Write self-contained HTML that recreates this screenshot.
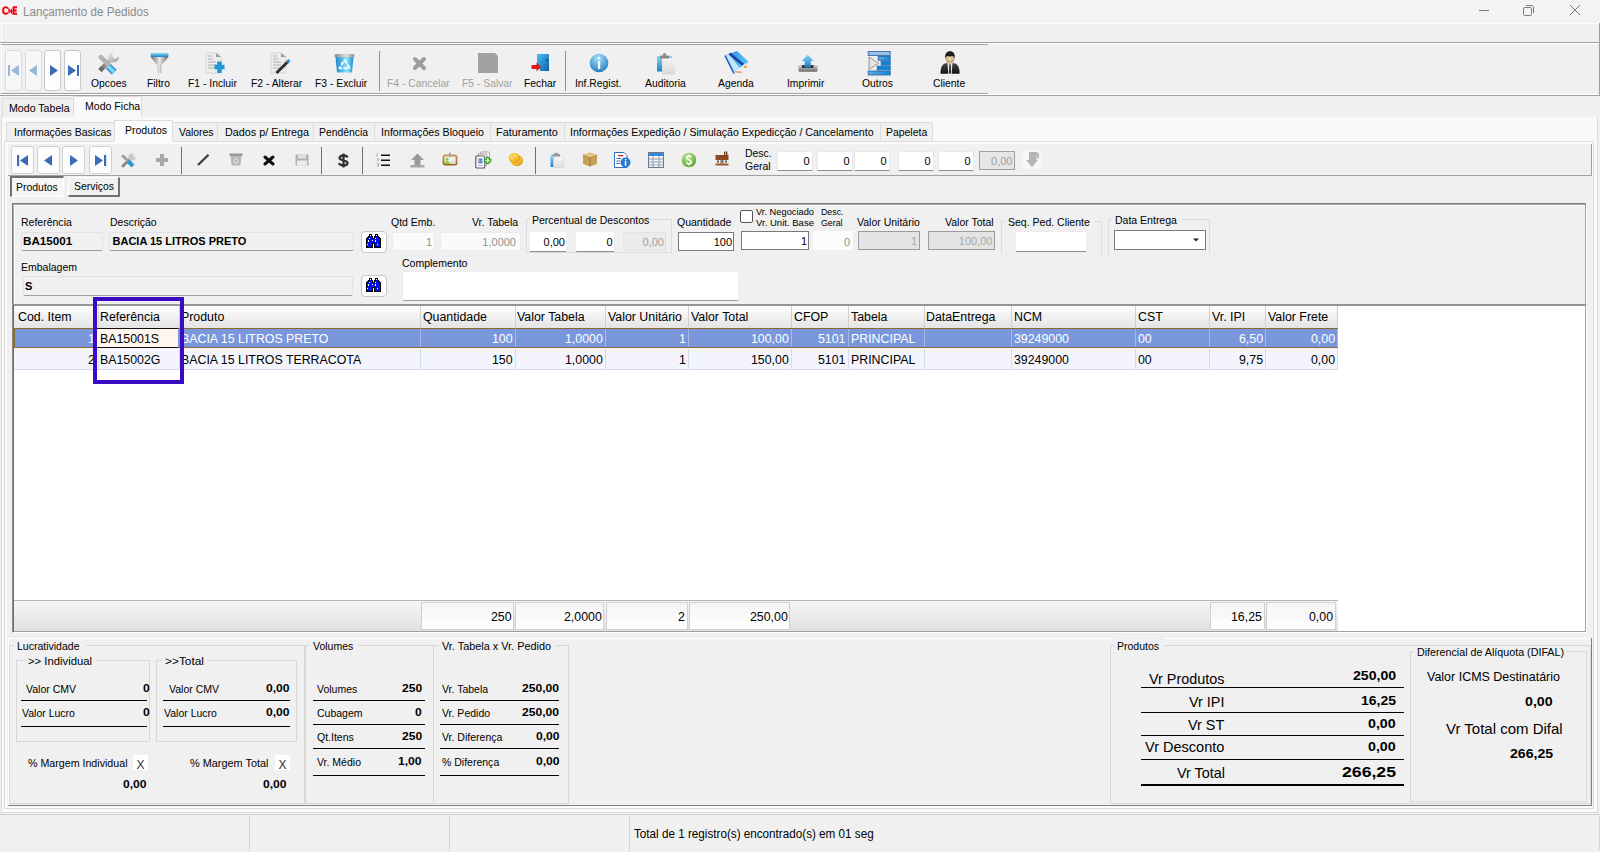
<!DOCTYPE html>
<html><head><meta charset="utf-8"><title>Lançamento de Pedidos</title>
<style>
html,body{margin:0;padding:0;}
body{width:1600px;height:852px;overflow:hidden;position:relative;background:#f0f0f0;font-family:"Liberation Sans",sans-serif;}
body>div,body>span,body>svg{position:absolute;box-sizing:border-box;}
.t{line-height:1;white-space:pre;}
</style></head><body>
<div style="left:0px;top:0px;width:1600px;height:23px;background:#f3f3f3"></div>
<div style="left:0px;top:23px;width:1599px;height:1px;background:#fbfbfb"></div>
<span class="t" style="left:23.40px;top:5.62px;font-size:12.5px;color:#8a8a8a;transform:scaleX(0.9331);transform-origin:0 0;">Lançamento de Pedidos</span>
<div style="left:1479px;top:10px;width:10px;height:1px;background:#7a7a7a"></div>
<svg style="left:1522px;top:4px;" width="14" height="13" viewBox="0 0 14 13"><rect x="1.5" y="3.5" width="8" height="8" rx="1.2" fill="none" stroke="#7a7a7a"/><path d="M4 1.5h5.5a2 2 0 0 1 2 2V9" fill="none" stroke="#7a7a7a"/></svg>
<svg style="left:1569px;top:4px;" width="13" height="13" viewBox="0 0 13 13"><path d="M1 1L11 11M11 1L1 11" stroke="#7a7a7a" stroke-width="1"/></svg>
<div style="left:0px;top:24px;width:1599px;height:18px;background:#f0f0f0"></div>
<div style="left:1px;top:24px;width:1px;height:18px;background:#fff"></div>
<div style="left:0px;top:42px;width:1599px;height:1px;background:#a0a0a0"></div>
<div style="left:0px;top:43px;width:1599px;height:1px;background:#ffffff"></div>
<div style="left:1599px;top:23px;width:1px;height:73px;background:#a0a0a0"></div>
<div style="left:1px;top:44px;width:987px;height:1px;background:#a0a0a0"></div>
<div style="left:1px;top:45px;width:1px;height:48px;background:#ffffff"></div>
<div style="left:1px;top:93px;width:987px;height:1px;background:#a0a0a0"></div>
<div style="left:0px;top:94px;width:1599px;height:1px;background:#ffffff"></div>
<div style="left:0px;top:95px;width:1599px;height:1px;background:#a0a0a0"></div>
<div style="left:5px;top:50px;width:17px;height:41px;background:#f7f7f7;border:1px solid #dcdcdc;border-radius:3px"></div>
<div style="left:25px;top:50px;width:17px;height:41px;background:#f7f7f7;border:1px solid #dcdcdc;border-radius:3px"></div>
<div style="left:44px;top:50px;width:17px;height:41px;background:#fdfdfd;border:1px solid #c8c8c8;border-radius:3px"></div>
<div style="left:64px;top:50px;width:17px;height:41px;background:#fdfdfd;border:1px solid #c8c8c8;border-radius:3px"></div>
<svg style="left:5px;top:63px;" width="17" height="14" viewBox="0 0 17 14"><rect x="3" y="2" width="2" height="11" fill="#9ab7d9"/><path d="M14 2L6 7.5L14 13Z" fill="#9ab7d9"/></svg>
<svg style="left:25px;top:63px;" width="17" height="14" viewBox="0 0 17 14"><path d="M12 2L4 7.5L12 13Z" fill="#9ab7d9"/></svg>
<svg style="left:45px;top:63px;" width="17" height="14" viewBox="0 0 17 14"><path d="M5 2L13 7.5L5 13Z" fill="#3a6db5"/></svg>
<svg style="left:65px;top:63px;" width="17" height="14" viewBox="0 0 17 14"><path d="M3 2L11 7.5L3 13Z" fill="#3a6db5"/><rect x="12" y="2" width="2" height="11" fill="#3a6db5"/></svg>
<span class="t" style="left:90.58px;top:77.59px;font-size:11px;color:#000;transform:scaleX(0.9400);transform-origin:0 0;">Opcoes</span>
<span class="t" style="left:146.51px;top:77.59px;font-size:11px;color:#000;transform:scaleX(0.9400);transform-origin:0 0;">Filtro</span>
<span class="t" style="left:188.08px;top:77.59px;font-size:11px;color:#000;transform:scaleX(0.9400);transform-origin:0 0;">F1 - Incluir</span>
<span class="t" style="left:250.93px;top:77.59px;font-size:11px;color:#000;transform:scaleX(0.9400);transform-origin:0 0;">F2 - Alterar</span>
<span class="t" style="left:315.36px;top:77.59px;font-size:11px;color:#000;transform:scaleX(0.9400);transform-origin:0 0;">F3 - Excluir</span>
<span class="t" style="left:386.68px;top:77.59px;font-size:11px;color:#a0a0a0;transform:scaleX(0.9400);transform-origin:0 0;">F4 - Cancelar</span>
<span class="t" style="left:461.72px;top:77.59px;font-size:11px;color:#a0a0a0;transform:scaleX(0.9400);transform-origin:0 0;">F5 - Salvar</span>
<span class="t" style="left:523.91px;top:77.59px;font-size:11px;color:#000;transform:scaleX(0.9400);transform-origin:0 0;">Fechar</span>
<span class="t" style="left:574.72px;top:77.59px;font-size:11px;color:#000;transform:scaleX(0.9400);transform-origin:0 0;">Inf.Regist.</span>
<span class="t" style="left:644.59px;top:77.59px;font-size:11px;color:#000;transform:scaleX(0.9400);transform-origin:0 0;">Auditoria</span>
<span class="t" style="left:718.17px;top:77.59px;font-size:11px;color:#000;transform:scaleX(0.9400);transform-origin:0 0;">Agenda</span>
<span class="t" style="left:787.33px;top:77.59px;font-size:11px;color:#000;transform:scaleX(0.9400);transform-origin:0 0;">Imprimir</span>
<span class="t" style="left:862.18px;top:77.59px;font-size:11px;color:#000;transform:scaleX(0.9400);transform-origin:0 0;">Outros</span>
<span class="t" style="left:932.51px;top:77.59px;font-size:11px;color:#000;transform:scaleX(0.9400);transform-origin:0 0;">Cliente</span>
<div style="left:379px;top:51px;width:1px;height:40px;background:#909090"></div>
<div style="left:565px;top:51px;width:1px;height:40px;background:#909090"></div>
<div style="left:0px;top:96px;width:1599px;height:21px;background:#f0f0f0"></div>
<div style="left:2px;top:98px;width:72px;height:19px;background:#f0f0f0;border:1px solid #dcdcdc;border-bottom:none"></div>
<span class="t" style="left:9.40px;top:102.89px;font-size:11px;color:#000;transform:scaleX(0.9651);transform-origin:0 0;">Modo Tabela</span>
<div style="left:73px;top:96px;width:69px;height:22px;background:#f9f9f9;border:1px solid #dcdcdc;border-bottom:none"></div>
<span class="t" style="left:84.50px;top:101.19px;font-size:11px;color:#000;transform:scaleX(0.9600);transform-origin:0 0;">Modo Ficha</span>
<div style="left:1px;top:117px;width:1597px;height:696px;background:#f9f9f9;border:1px solid #dcdcdc;border-top:none"></div>
<div style="left:6px;top:122px;width:109px;height:19px;background:#f0f0f0;border:1px solid #dcdcdc;border-bottom:none"></div>
<span class="t" style="left:13.50px;top:126.69px;font-size:11px;color:#000;transform:scaleX(0.9549);transform-origin:0 0;">Informações Basicas</span>
<div style="left:172px;top:122px;width:46px;height:19px;background:#f0f0f0;border:1px solid #dcdcdc;border-bottom:none"></div>
<span class="t" style="left:178.70px;top:126.69px;font-size:11px;color:#000;transform:scaleX(0.9457);transform-origin:0 0;">Valores</span>
<div style="left:217px;top:122px;width:97px;height:19px;background:#f0f0f0;border:1px solid #dcdcdc;border-bottom:none"></div>
<span class="t" style="left:225.20px;top:126.69px;font-size:11px;color:#000;transform:scaleX(0.9812);transform-origin:0 0;">Dados p/ Entrega</span>
<div style="left:313px;top:122px;width:62px;height:19px;background:#f0f0f0;border:1px solid #dcdcdc;border-bottom:none"></div>
<span class="t" style="left:319.20px;top:126.69px;font-size:11px;color:#000;transform:scaleX(0.9425);transform-origin:0 0;">Pendência</span>
<div style="left:374px;top:122px;width:117px;height:19px;background:#f0f0f0;border:1px solid #dcdcdc;border-bottom:none"></div>
<span class="t" style="left:380.50px;top:126.69px;font-size:11px;color:#000;transform:scaleX(0.9681);transform-origin:0 0;">Informações Bloqueio</span>
<div style="left:490px;top:122px;width:75px;height:19px;background:#f0f0f0;border:1px solid #dcdcdc;border-bottom:none"></div>
<span class="t" style="left:495.60px;top:126.69px;font-size:11px;color:#000;transform:scaleX(0.9909);transform-origin:0 0;">Faturamento</span>
<div style="left:564px;top:122px;width:317px;height:19px;background:#f0f0f0;border:1px solid #dcdcdc;border-bottom:none"></div>
<span class="t" style="left:569.60px;top:126.69px;font-size:11px;color:#000;transform:scaleX(0.9622);transform-origin:0 0;">Informações Expedição / Simulação Expedicção / Cancelamento</span>
<div style="left:880px;top:122px;width:53px;height:19px;background:#f0f0f0;border:1px solid #dcdcdc;border-bottom:none"></div>
<span class="t" style="left:885.80px;top:126.69px;font-size:11px;color:#000;transform:scaleX(0.9487);transform-origin:0 0;">Papeleta</span>
<div style="left:114px;top:120px;width:59px;height:22px;background:#fbfbfb;border:1px solid #dcdcdc;border-bottom:none"></div>
<span class="t" style="left:125.40px;top:124.89px;font-size:11px;color:#000;transform:scaleX(0.9550);transform-origin:0 0;">Produtos</span>
<div style="left:4px;top:141px;width:1590px;height:668px;background:#fbfbfb;border:1px solid #dcdcdc;border-top:none"></div>
<div style="left:172px;top:141px;width:1422px;height:1px;background:#dcdcdc"></div>
<div style="left:4px;top:141px;width:110px;height:1px;background:#dcdcdc"></div>
<div style="left:8px;top:144px;width:1584px;height:31px;background:#f0f0f0"></div>
<div style="left:8px;top:175px;width:1584px;height:1px;background:#a0a0a0"></div>
<div style="left:1591px;top:144px;width:1px;height:31px;background:#a0a0a0"></div>
<div style="left:7px;top:176px;width:1586px;height:630px;background:#f0f0f0"></div>
<div style="left:11px;top:146px;width:23px;height:28px;background:#fdfdfd;border:1px solid #d0d0d0;border-radius:3px"></div>
<div style="left:37px;top:146px;width:23px;height:28px;background:#fdfdfd;border:1px solid #d0d0d0;border-radius:3px"></div>
<div style="left:62px;top:146px;width:23px;height:28px;background:#fdfdfd;border:1px solid #d0d0d0;border-radius:3px"></div>
<div style="left:89px;top:146px;width:23px;height:28px;background:#fdfdfd;border:1px solid #d0d0d0;border-radius:3px"></div>
<svg style="left:11px;top:153px;" width="23" height="14" viewBox="0 0 23 14"><rect x="6" y="2" width="2.2" height="11" fill="#3a6db5"/><path d="M17 2L9 7.5L17 13Z" fill="#3a6db5"/></svg>
<svg style="left:37px;top:153px;" width="23" height="14" viewBox="0 0 23 14"><path d="M15 2L7 7.5L15 13Z" fill="#3a6db5"/></svg>
<svg style="left:62px;top:153px;" width="23" height="14" viewBox="0 0 23 14"><path d="M8 2L16 7.5L8 13Z" fill="#3a6db5"/></svg>
<svg style="left:89px;top:153px;" width="23" height="14" viewBox="0 0 23 14"><path d="M6 2L14 7.5L6 13Z" fill="#3a6db5"/><rect x="15" y="2" width="2.2" height="11" fill="#3a6db5"/></svg>
<div style="left:181px;top:147px;width:1px;height:27px;background:#707070"></div>
<div style="left:321px;top:147px;width:1px;height:27px;background:#707070"></div>
<div style="left:362px;top:147px;width:1px;height:27px;background:#707070"></div>
<div style="left:535px;top:147px;width:1px;height:27px;background:#707070"></div>
<span class="t" style="left:745.40px;top:148.29px;font-size:11px;color:#000;transform:scaleX(0.9500);transform-origin:0 0;">Desc.</span>
<span class="t" style="left:745.40px;top:161.29px;font-size:11px;color:#000;transform:scaleX(0.9500);transform-origin:0 0;">Geral</span>
<div style="left:777px;top:151px;width:36px;height:20px;background:#fff;border:1px solid #e8e8e8;border-bottom:1px solid #8e8e8e;border-radius:2px 2px 0 0"></div>
<span class="t" style="left:803.38px;top:156.09px;font-size:11px;color:#000;">0</span>
<div style="left:817px;top:151px;width:36px;height:20px;background:#fff;border:1px solid #e8e8e8;border-bottom:1px solid #8e8e8e;border-radius:2px 2px 0 0"></div>
<span class="t" style="left:843.38px;top:156.09px;font-size:11px;color:#000;">0</span>
<div style="left:854px;top:151px;width:36px;height:20px;background:#fff;border:1px solid #e8e8e8;border-bottom:1px solid #8e8e8e;border-radius:2px 2px 0 0"></div>
<span class="t" style="left:880.38px;top:156.09px;font-size:11px;color:#000;">0</span>
<div style="left:898px;top:151px;width:36px;height:20px;background:#fff;border:1px solid #e8e8e8;border-bottom:1px solid #8e8e8e;border-radius:2px 2px 0 0"></div>
<span class="t" style="left:924.38px;top:156.09px;font-size:11px;color:#000;">0</span>
<div style="left:938px;top:151px;width:36px;height:20px;background:#fff;border:1px solid #e8e8e8;border-bottom:1px solid #8e8e8e;border-radius:2px 2px 0 0"></div>
<span class="t" style="left:964.38px;top:156.09px;font-size:11px;color:#000;">0</span>
<div style="left:979px;top:151px;width:36px;height:19px;background:#e6e6e6;border:1px solid #a0a0a0"></div>
<span class="t" style="left:991.09px;top:155.69px;font-size:11px;color:#a0a0a0;">0,00</span>
<div style="left:1022px;top:150px;width:19px;height:19px;background:#f7f7f7;border-radius:3px"></div>
<div style="left:10px;top:176px;width:54px;height:21px;background:#f6f6f6;border-left:2px solid #707070;border-top:2px solid #707070;border-right:1px solid #fff;border-bottom:1px solid #fff"></div>
<span class="t" style="left:16.00px;top:182.29px;font-size:11px;color:#000;transform:scaleX(0.9500);transform-origin:0 0;">Produtos</span>
<div style="left:68px;top:177px;width:52px;height:20px;background:#f0f0f0;border-left:1px solid #fff;border-top:1px solid #fff;border-right:2px solid #707070;border-bottom:2px solid #707070"></div>
<span class="t" style="left:73.50px;top:181.29px;font-size:11px;color:#000;transform:scaleX(0.9500);transform-origin:0 0;">Serviços</span>
<div style="left:12px;top:203px;width:1575px;height:102px;background:#f0f0f0;border-left:1px solid #808080;border-top:1px solid #808080"></div>
<div style="left:13px;top:204px;width:1573px;height:1px;background:#a8a8a8"></div>
<div style="left:13px;top:204px;width:1px;height:101px;background:#a8a8a8"></div>
<div style="left:14px;top:205px;width:1572px;height:1px;background:#fff"></div>
<div style="left:14px;top:205px;width:1px;height:100px;background:#fff"></div>
<div style="left:1585px;top:204px;width:1px;height:101px;background:#a0a0a0"></div>
<div style="left:1586px;top:203px;width:1px;height:102px;background:#fff"></div>
<span class="t" style="left:21.40px;top:217.09px;font-size:11px;color:#000;transform:scaleX(0.9550);transform-origin:0 0;">Referência</span>
<span class="t" style="left:110.00px;top:217.09px;font-size:11px;color:#000;transform:scaleX(0.9550);transform-origin:0 0;">Descrição</span>
<div style="left:21px;top:232px;width:82px;height:19px;background:#f0f0f0;border:1px solid #e2e2e2;border-bottom:1px solid #a0a0a0;border-radius:2px"></div>
<span class="t" style="left:23.20px;top:236.29px;font-size:11px;color:#000;font-weight:bold;transform:scaleX(1.0607);transform-origin:0 0;">BA15001</span>
<div style="left:109px;top:232px;width:245px;height:19px;background:#f0f0f0;border:1px solid #e2e2e2;border-bottom:1px solid #a0a0a0;border-radius:2px"></div>
<span class="t" style="left:112.50px;top:236.29px;font-size:11px;color:#000;font-weight:bold;">BACIA 15 LITROS PRETO</span>
<span class="t" style="left:21.40px;top:262.29px;font-size:11px;color:#000;transform:scaleX(0.9550);transform-origin:0 0;">Embalagem</span>
<div style="left:23px;top:276px;width:330px;height:20px;background:#f0f0f0;border:1px solid #e2e2e2;border-bottom:1px solid #a0a0a0;border-radius:2px"></div>
<span class="t" style="left:25.00px;top:280.59px;font-size:11px;color:#000;font-weight:bold;">S</span>
<div style="left:361px;top:231px;width:26px;height:22px;background:#fdfdfd;border:1px solid #c8c8c8;border-radius:4px"></div>
<div style="left:361px;top:275px;width:26px;height:22px;background:#fdfdfd;border:1px solid #c8c8c8;border-radius:4px"></div>
<span class="t" style="left:390.50px;top:217.49px;font-size:11px;color:#000;transform:scaleX(0.9550);transform-origin:0 0;">Qtd Emb.</span>
<div style="left:392px;top:232px;width:43px;height:19px;background:#fafafa;border:1px solid #ececec"></div>
<span class="t" style="left:425.88px;top:237.09px;font-size:11px;color:#909090;">1</span>
<span class="t" style="left:471.86px;top:217.49px;font-size:11px;color:#000;transform:scaleX(0.9550);transform-origin:0 0;">Vr. Tabela</span>
<div style="left:440px;top:232px;width:81px;height:19px;background:#fafafa;border:1px solid #ececec"></div>
<span class="t" style="left:482.35px;top:237.09px;font-size:11px;color:#909090;">1,0000</span>
<div style="left:526px;top:219px;width:146px;height:34px;border:1px solid #dcdcdc"></div>
<div style="left:530px;top:215px;width:112px;height:10px;background:#f0f0f0"></div>
<span class="t" style="left:532.00px;top:215.49px;font-size:11px;color:#000;transform:scaleX(0.9550);transform-origin:0 0;">Percentual de Descontos</span>
<div style="left:529px;top:231px;width:38px;height:21px;background:#fff;border:1px solid #ececec;border-bottom:1px solid #8a8a8a;border-radius:2px"></div>
<span class="t" style="left:543.59px;top:237.09px;font-size:11px;color:#000;">0,00</span>
<div style="left:575px;top:231px;width:40px;height:21px;background:#fff;border:1px solid #ececec;border-bottom:1px solid #8a8a8a;border-radius:2px"></div>
<span class="t" style="left:606.38px;top:237.09px;font-size:11px;color:#000;">0</span>
<div style="left:623px;top:232px;width:43px;height:19px;background:#ebebeb;border:1px solid #e4e4e4"></div>
<span class="t" style="left:642.59px;top:237.09px;font-size:11px;color:#a0a0a0;">0,00</span>
<span class="t" style="left:677.40px;top:217.49px;font-size:11px;color:#000;transform:scaleX(0.9550);transform-origin:0 0;">Quantidade</span>
<div style="left:678px;top:232px;width:56px;height:19px;background:#fff;border:1px solid #7a7a7a"></div>
<span class="t" style="left:713.65px;top:237.09px;font-size:11px;color:#000;">100</span>
<div style="left:740px;top:210px;width:13px;height:13px;background:#fff;border:1px solid #555;border-radius:2px"></div>
<span class="t" style="left:755.70px;top:207.88px;font-size:9px;color:#000;transform:scaleX(1.0320);transform-origin:0 0;">Vr. Negociado</span>
<span class="t" style="left:755.70px;top:218.58px;font-size:9px;color:#000;transform:scaleX(1.0605);transform-origin:0 0;">Vr. Unit. Base</span>
<span class="t" style="left:821.30px;top:207.88px;font-size:9px;color:#000;transform:scaleX(0.9800);transform-origin:0 0;">Desc.</span>
<span class="t" style="left:821.30px;top:218.58px;font-size:9px;color:#000;transform:scaleX(0.9800);transform-origin:0 0;">Geral</span>
<div style="left:741px;top:231px;width:68px;height:19px;background:#fff;border:1px solid #7a7a7a"></div>
<span class="t" style="left:800.88px;top:236.29px;font-size:11px;color:#000;">1</span>
<div style="left:813px;top:231px;width:40px;height:19px;background:#fcfcfc"></div>
<span class="t" style="left:843.88px;top:236.79px;font-size:11px;color:#909090;">0</span>
<span class="t" style="left:856.50px;top:216.89px;font-size:11px;color:#000;transform:scaleX(0.9550);transform-origin:0 0;">Valor Unitário</span>
<div style="left:858px;top:231px;width:62px;height:19px;background:#e4e4e4;border:1px solid #9c9c9c"></div>
<span class="t" style="left:910.88px;top:236.49px;font-size:11px;color:#a8a8a8;">1</span>
<span class="t" style="left:944.74px;top:216.89px;font-size:11px;color:#000;transform:scaleX(0.9550);transform-origin:0 0;">Valor Total</span>
<div style="left:928px;top:231px;width:67px;height:19px;background:#e4e4e4;border:1px solid #9c9c9c"></div>
<span class="t" style="left:958.85px;top:236.49px;font-size:11px;color:#a8a8a8;">100,00</span>
<div style="left:1001px;top:221px;width:101px;height:33px;border:1px solid #dcdcdc;border-bottom:none"></div>
<div style="left:1005px;top:216px;width:90px;height:10px;background:#f0f0f0"></div>
<span class="t" style="left:1008.00px;top:216.89px;font-size:11px;color:#000;transform:scaleX(0.9550);transform-origin:0 0;">Seq. Ped. Cliente</span>
<div style="left:1015px;top:231px;width:72px;height:21px;background:#fff;border:1px solid #ececec;border-bottom:1px solid #8a8a8a;border-radius:2px"></div>
<div style="left:1108px;top:219px;width:102px;height:35px;border:1px solid #dcdcdc;border-bottom:none"></div>
<div style="left:1112px;top:214px;width:70px;height:10px;background:#f0f0f0"></div>
<span class="t" style="left:1115.30px;top:215.39px;font-size:11px;color:#000;transform:scaleX(0.9550);transform-origin:0 0;">Data Entrega</span>
<div style="left:1114px;top:230px;width:92px;height:20px;background:#fff;border:1px solid #7a7a7a"></div>
<svg style="left:1192px;top:237px;" width="9" height="6" viewBox="0 0 9 6"><path d="M1 1.5h6L4 4.5Z" fill="#222"/></svg>
<span class="t" style="left:401.80px;top:258.49px;font-size:11px;color:#000;transform:scaleX(0.9550);transform-origin:0 0;">Complemento</span>
<div style="left:402px;top:271px;width:337px;height:30px;background:#fff;border:1px solid #ececec;border-bottom:1px solid #9a9a9a;border-radius:2px"></div>
<div style="left:12px;top:304px;width:1575px;height:329px;background:#fff;border-left:1px solid #8a8a8a;border-top:1px solid #959595;border-right:1px solid #fff;border-bottom:1px solid #fff"></div>
<div style="left:13px;top:305px;width:1573px;height:1px;background:#959595"></div>
<div style="left:13px;top:305px;width:1px;height:327px;background:#6e6e6e"></div>
<div style="left:1585px;top:305px;width:1px;height:327px;background:#a0a0a0"></div>
<div style="left:14px;top:631px;width:1572px;height:1px;background:#a0a0a0"></div>
<div style="left:14px;top:306px;width:1324px;height:22px;background:linear-gradient(#fdfdfd,#e4e4e4)"></div>
<div style="left:98px;top:306px;width:1px;height:22px;background:#d0d0d0"></div>
<div style="left:179px;top:306px;width:1px;height:22px;background:#d0d0d0"></div>
<div style="left:420px;top:306px;width:1px;height:22px;background:#d0d0d0"></div>
<div style="left:515px;top:306px;width:1px;height:22px;background:#d0d0d0"></div>
<div style="left:605px;top:306px;width:1px;height:22px;background:#d0d0d0"></div>
<div style="left:688px;top:306px;width:1px;height:22px;background:#d0d0d0"></div>
<div style="left:791px;top:306px;width:1px;height:22px;background:#d0d0d0"></div>
<div style="left:848px;top:306px;width:1px;height:22px;background:#d0d0d0"></div>
<div style="left:924px;top:306px;width:1px;height:22px;background:#d0d0d0"></div>
<div style="left:1011px;top:306px;width:1px;height:22px;background:#d0d0d0"></div>
<div style="left:1135px;top:306px;width:1px;height:22px;background:#d0d0d0"></div>
<div style="left:1209px;top:306px;width:1px;height:22px;background:#d0d0d0"></div>
<div style="left:1265px;top:306px;width:1px;height:22px;background:#d0d0d0"></div>
<div style="left:1337px;top:306px;width:1px;height:22px;background:#d0d0d0"></div>
<span class="t" style="left:17.50px;top:311.24px;font-size:12px;color:#000;transform:scaleX(1.0300);transform-origin:0 0;">Cod. Item</span>
<span class="t" style="left:100.25px;top:311.24px;font-size:12px;color:#000;transform:scaleX(1.0300);transform-origin:0 0;">Referência</span>
<span class="t" style="left:181.25px;top:311.24px;font-size:12px;color:#000;transform:scaleX(1.0300);transform-origin:0 0;">Produto</span>
<span class="t" style="left:422.80px;top:311.24px;font-size:12px;color:#000;transform:scaleX(1.0300);transform-origin:0 0;">Quantidade</span>
<span class="t" style="left:517.20px;top:311.24px;font-size:12px;color:#000;transform:scaleX(1.0300);transform-origin:0 0;">Valor Tabela</span>
<span class="t" style="left:607.80px;top:311.24px;font-size:12px;color:#000;transform:scaleX(1.0300);transform-origin:0 0;">Valor Unitário</span>
<span class="t" style="left:690.50px;top:311.24px;font-size:12px;color:#000;transform:scaleX(1.0300);transform-origin:0 0;">Valor Total</span>
<span class="t" style="left:793.75px;top:311.24px;font-size:12px;color:#000;transform:scaleX(1.0300);transform-origin:0 0;">CFOP</span>
<span class="t" style="left:850.90px;top:311.24px;font-size:12px;color:#000;transform:scaleX(1.0300);transform-origin:0 0;">Tabela</span>
<span class="t" style="left:926.25px;top:311.24px;font-size:12px;color:#000;transform:scaleX(1.0300);transform-origin:0 0;">DataEntrega</span>
<span class="t" style="left:1013.75px;top:311.24px;font-size:12px;color:#000;transform:scaleX(1.0300);transform-origin:0 0;">NCM</span>
<span class="t" style="left:1137.80px;top:311.24px;font-size:12px;color:#000;transform:scaleX(1.0300);transform-origin:0 0;">CST</span>
<span class="t" style="left:1211.50px;top:311.24px;font-size:12px;color:#000;transform:scaleX(1.0300);transform-origin:0 0;">Vr. IPI</span>
<span class="t" style="left:1267.80px;top:311.24px;font-size:12px;color:#000;transform:scaleX(1.0300);transform-origin:0 0;">Valor Frete</span>
<div style="left:14px;top:328px;width:1324px;height:20px;background:#7b97dc;border:1px solid #8c6a2c"></div>
<div style="left:14px;top:348px;width:1324px;height:22px;background:#f4f5fc;border-bottom:1px solid #d4dbe8"></div>
<div style="left:98px;top:349px;width:1px;height:21px;background:#d6dcea"></div>
<div style="left:179px;top:349px;width:1px;height:21px;background:#d6dcea"></div>
<div style="left:420px;top:349px;width:1px;height:21px;background:#d6dcea"></div>
<div style="left:420px;top:329px;width:1px;height:18px;background:#a8b8e8"></div>
<div style="left:515px;top:349px;width:1px;height:21px;background:#d6dcea"></div>
<div style="left:515px;top:329px;width:1px;height:18px;background:#a8b8e8"></div>
<div style="left:605px;top:349px;width:1px;height:21px;background:#d6dcea"></div>
<div style="left:605px;top:329px;width:1px;height:18px;background:#a8b8e8"></div>
<div style="left:688px;top:349px;width:1px;height:21px;background:#d6dcea"></div>
<div style="left:688px;top:329px;width:1px;height:18px;background:#a8b8e8"></div>
<div style="left:791px;top:349px;width:1px;height:21px;background:#d6dcea"></div>
<div style="left:791px;top:329px;width:1px;height:18px;background:#a8b8e8"></div>
<div style="left:848px;top:349px;width:1px;height:21px;background:#d6dcea"></div>
<div style="left:848px;top:329px;width:1px;height:18px;background:#a8b8e8"></div>
<div style="left:924px;top:349px;width:1px;height:21px;background:#d6dcea"></div>
<div style="left:924px;top:329px;width:1px;height:18px;background:#a8b8e8"></div>
<div style="left:1011px;top:349px;width:1px;height:21px;background:#d6dcea"></div>
<div style="left:1011px;top:329px;width:1px;height:18px;background:#a8b8e8"></div>
<div style="left:1135px;top:349px;width:1px;height:21px;background:#d6dcea"></div>
<div style="left:1135px;top:329px;width:1px;height:18px;background:#a8b8e8"></div>
<div style="left:1209px;top:349px;width:1px;height:21px;background:#d6dcea"></div>
<div style="left:1209px;top:329px;width:1px;height:18px;background:#a8b8e8"></div>
<div style="left:1265px;top:349px;width:1px;height:21px;background:#d6dcea"></div>
<div style="left:1265px;top:329px;width:1px;height:18px;background:#a8b8e8"></div>
<div style="left:1337px;top:349px;width:1px;height:21px;background:#d6dcea"></div>
<div style="left:1337px;top:329px;width:1px;height:18px;background:#a8b8e8"></div>
<div style="left:97px;top:328px;width:81px;height:20px;background:#fff7ee;border-top:1px solid #101010;border-bottom:1px solid #101010"></div>
<span class="t" style="left:88.38px;top:333.34px;font-size:12px;color:#ffffff;transform:scaleX(1.0300);transform-origin:0 0;">1</span>
<span class="t" style="left:100.25px;top:333.34px;font-size:12px;color:#000;transform:scaleX(1.0300);transform-origin:0 0;">BA15001S</span>
<span class="t" style="left:181.25px;top:333.34px;font-size:12px;color:#ffffff;transform:scaleX(1.0300);transform-origin:0 0;">BACIA 15 LITROS PRETO</span>
<span class="t" style="left:491.58px;top:333.34px;font-size:12px;color:#ffffff;transform:scaleX(1.0300);transform-origin:0 0;">100</span>
<span class="t" style="left:564.99px;top:333.34px;font-size:12px;color:#ffffff;transform:scaleX(1.0300);transform-origin:0 0;">1,0000</span>
<span class="t" style="left:678.63px;top:333.34px;font-size:12px;color:#ffffff;transform:scaleX(1.0300);transform-origin:0 0;">1</span>
<span class="t" style="left:750.94px;top:333.34px;font-size:12px;color:#ffffff;transform:scaleX(1.0300);transform-origin:0 0;">100,00</span>
<span class="t" style="left:818.40px;top:333.34px;font-size:12px;color:#ffffff;transform:scaleX(1.0300);transform-origin:0 0;">5101</span>
<span class="t" style="left:850.90px;top:333.34px;font-size:12px;color:#ffffff;transform:scaleX(1.0300);transform-origin:0 0;">PRINCIPAL</span>
<span class="t" style="left:1013.75px;top:333.34px;font-size:12px;color:#ffffff;transform:scaleX(1.0300);transform-origin:0 0;">39249000</span>
<span class="t" style="left:1137.80px;top:333.34px;font-size:12px;color:#ffffff;transform:scaleX(1.0300);transform-origin:0 0;">00</span>
<span class="t" style="left:1238.74px;top:333.34px;font-size:12px;color:#ffffff;transform:scaleX(1.0300);transform-origin:0 0;">6,50</span>
<span class="t" style="left:1310.64px;top:333.34px;font-size:12px;color:#ffffff;transform:scaleX(1.0300);transform-origin:0 0;">0,00</span>
<span class="t" style="left:88.38px;top:354.44px;font-size:12px;color:#000;transform:scaleX(1.0300);transform-origin:0 0;">2</span>
<span class="t" style="left:100.25px;top:354.44px;font-size:12px;color:#000;transform:scaleX(1.0300);transform-origin:0 0;">BA15002G</span>
<span class="t" style="left:181.25px;top:354.44px;font-size:12px;color:#000;transform:scaleX(1.0300);transform-origin:0 0;">BACIA 15 LITROS TERRACOTA</span>
<span class="t" style="left:491.58px;top:354.44px;font-size:12px;color:#000;transform:scaleX(1.0300);transform-origin:0 0;">150</span>
<span class="t" style="left:564.99px;top:354.44px;font-size:12px;color:#000;transform:scaleX(1.0300);transform-origin:0 0;">1,0000</span>
<span class="t" style="left:678.63px;top:354.44px;font-size:12px;color:#000;transform:scaleX(1.0300);transform-origin:0 0;">1</span>
<span class="t" style="left:750.94px;top:354.44px;font-size:12px;color:#000;transform:scaleX(1.0300);transform-origin:0 0;">150,00</span>
<span class="t" style="left:818.40px;top:354.44px;font-size:12px;color:#000;transform:scaleX(1.0300);transform-origin:0 0;">5101</span>
<span class="t" style="left:850.90px;top:354.44px;font-size:12px;color:#000;transform:scaleX(1.0300);transform-origin:0 0;">PRINCIPAL</span>
<span class="t" style="left:1013.75px;top:354.44px;font-size:12px;color:#000;transform:scaleX(1.0300);transform-origin:0 0;">39249000</span>
<span class="t" style="left:1137.80px;top:354.44px;font-size:12px;color:#000;transform:scaleX(1.0300);transform-origin:0 0;">00</span>
<span class="t" style="left:1238.74px;top:354.44px;font-size:12px;color:#000;transform:scaleX(1.0300);transform-origin:0 0;">9,75</span>
<span class="t" style="left:1310.64px;top:354.44px;font-size:12px;color:#000;transform:scaleX(1.0300);transform-origin:0 0;">0,00</span>
<div style="left:14px;top:600px;width:1324px;height:31px;background:linear-gradient(#f6f6f6,#e0e0e0);border-top:1px solid #b4b4b4"></div>
<div style="left:421px;top:602px;width:93px;height:28px;background:linear-gradient(#f4f4f4,#ffffff);border:1px solid #d0d0d0"></div>
<span class="t" style="left:490.88px;top:611.14px;font-size:12px;color:#000;transform:scaleX(1.0300);transform-origin:0 0;">250</span>
<div style="left:515px;top:602px;width:89px;height:28px;background:linear-gradient(#f4f4f4,#ffffff);border:1px solid #d0d0d0"></div>
<span class="t" style="left:564.39px;top:611.14px;font-size:12px;color:#000;transform:scaleX(1.0300);transform-origin:0 0;">2,0000</span>
<div style="left:606px;top:602px;width:82px;height:28px;background:linear-gradient(#f4f4f4,#ffffff);border:1px solid #d0d0d0"></div>
<span class="t" style="left:678.13px;top:611.14px;font-size:12px;color:#000;transform:scaleX(1.0300);transform-origin:0 0;">2</span>
<div style="left:689px;top:602px;width:101px;height:28px;background:linear-gradient(#f4f4f4,#ffffff);border:1px solid #d0d0d0"></div>
<span class="t" style="left:750.29px;top:611.14px;font-size:12px;color:#000;transform:scaleX(1.0300);transform-origin:0 0;">250,00</span>
<div style="left:1210px;top:602px;width:55px;height:28px;background:linear-gradient(#f4f4f4,#ffffff);border:1px solid #d0d0d0"></div>
<span class="t" style="left:1231.27px;top:611.14px;font-size:12px;color:#000;transform:scaleX(1.0300);transform-origin:0 0;">16,25</span>
<div style="left:1266px;top:602px;width:70px;height:28px;background:linear-gradient(#f4f4f4,#ffffff);border:1px solid #d0d0d0"></div>
<span class="t" style="left:1309.44px;top:611.14px;font-size:12px;color:#000;transform:scaleX(1.0300);transform-origin:0 0;">0,00</span>
<div style="left:92.5px;top:297px;width:91px;height:87px;border:4px solid #3b0bc4"></div>
<div style="left:8px;top:638px;width:1584px;height:168px;background:#f0f0f0"></div>
<div style="left:8px;top:638px;width:1583px;height:1px;background:#fff"></div>
<div style="left:8px;top:805px;width:1584px;height:1px;background:#808080"></div>
<div style="left:1591px;top:638px;width:1px;height:168px;background:#808080"></div>
<div style="left:8px;top:638px;width:1px;height:167px;background:#fff"></div>
<div style="left:9px;top:645px;width:296px;height:159px;border:1px solid #d8d8d8"></div>
<div style="left:14px;top:640px;width:72px;height:10px;background:#f0f0f0"></div>
<span class="t" style="left:16.50px;top:641.09px;font-size:11px;color:#000;transform:scaleX(0.9550);transform-origin:0 0;">Lucratividade</span>
<div style="left:16px;top:660px;width:134px;height:82px;border:1px solid #d8d8d8"></div>
<div style="left:25px;top:655px;width:72px;height:10px;background:#f0f0f0"></div>
<span class="t" style="left:27.50px;top:656.49px;font-size:11px;color:#000;transform:scaleX(1.0259);transform-origin:0 0;">&gt;&gt; Individual</span>
<div style="left:156px;top:660px;width:141px;height:82px;border:1px solid #d8d8d8"></div>
<div style="left:162px;top:655px;width:45px;height:10px;background:#f0f0f0"></div>
<span class="t" style="left:164.50px;top:656.49px;font-size:11px;color:#000;transform:scaleX(1.0808);transform-origin:0 0;">&gt;&gt;Total</span>
<span class="t" style="left:26.40px;top:684.29px;font-size:11px;color:#000;transform:scaleX(0.9550);transform-origin:0 0;">Valor CMV</span>
<span class="t" style="left:143.27px;top:683.49px;font-size:11px;color:#000;font-weight:bold;transform:scaleX(1.1000);transform-origin:0 0;">0</span>
<div style="left:21px;top:700px;width:126px;height:1px;background:#000"></div>
<span class="t" style="left:21.60px;top:708.29px;font-size:11px;color:#000;transform:scaleX(0.9550);transform-origin:0 0;">Valor Lucro</span>
<span class="t" style="left:143.27px;top:707.49px;font-size:11px;color:#000;font-weight:bold;transform:scaleX(1.1000);transform-origin:0 0;">0</span>
<div style="left:21px;top:726px;width:126px;height:1px;background:#000"></div>
<span class="t" style="left:168.50px;top:684.29px;font-size:11px;color:#000;transform:scaleX(0.9550);transform-origin:0 0;">Valor CMV</span>
<span class="t" style="left:266.45px;top:683.49px;font-size:11px;color:#000;font-weight:bold;transform:scaleX(1.1000);transform-origin:0 0;">0,00</span>
<div style="left:163px;top:700px;width:127px;height:1px;background:#000"></div>
<span class="t" style="left:164.00px;top:708.29px;font-size:11px;color:#000;transform:scaleX(0.9550);transform-origin:0 0;">Valor Lucro</span>
<span class="t" style="left:266.45px;top:707.49px;font-size:11px;color:#000;font-weight:bold;transform:scaleX(1.1000);transform-origin:0 0;">0,00</span>
<div style="left:163px;top:726px;width:127px;height:1px;background:#000"></div>
<span class="t" style="left:27.50px;top:758.29px;font-size:11px;color:#000;transform:scaleX(0.9687);transform-origin:0 0;">% Margem Individual</span>
<div style="left:133px;top:755px;width:15px;height:15px;background:#fff"></div>
<span class="t" style="left:136.50px;top:758.94px;font-size:12px;color:#333;">X</span>
<span class="t" style="left:190.30px;top:758.29px;font-size:11px;color:#000;transform:scaleX(0.9902);transform-origin:0 0;">% Margem Total</span>
<div style="left:275px;top:755px;width:15px;height:15px;background:#fff"></div>
<span class="t" style="left:278.50px;top:758.94px;font-size:12px;color:#333;">X</span>
<span class="t" style="left:123.45px;top:778.89px;font-size:11px;color:#000;font-weight:bold;transform:scaleX(1.1000);transform-origin:0 0;">0,00</span>
<span class="t" style="left:263.45px;top:778.89px;font-size:11px;color:#000;font-weight:bold;transform:scaleX(1.1000);transform-origin:0 0;">0,00</span>
<div style="left:305px;top:645px;width:129px;height:159px;border:1px solid #d8d8d8"></div>
<div style="left:310px;top:640px;width:48px;height:10px;background:#f0f0f0"></div>
<span class="t" style="left:313.00px;top:641.09px;font-size:11px;color:#000;transform:scaleX(0.9550);transform-origin:0 0;">Volumes</span>
<span class="t" style="left:316.50px;top:684.29px;font-size:11px;color:#000;transform:scaleX(0.9550);transform-origin:0 0;">Volumes</span>
<span class="t" style="left:401.81px;top:683.49px;font-size:11px;color:#000;font-weight:bold;transform:scaleX(1.1000);transform-origin:0 0;">250</span>
<div style="left:313px;top:700px;width:112px;height:1px;background:#000"></div>
<span class="t" style="left:316.50px;top:708.29px;font-size:11px;color:#000;transform:scaleX(0.9550);transform-origin:0 0;">Cubagem</span>
<span class="t" style="left:415.27px;top:707.49px;font-size:11px;color:#000;font-weight:bold;transform:scaleX(1.1000);transform-origin:0 0;">0</span>
<div style="left:313px;top:724px;width:112px;height:1px;background:#000"></div>
<span class="t" style="left:316.50px;top:732.29px;font-size:11px;color:#000;transform:scaleX(0.9550);transform-origin:0 0;">Qt.Itens</span>
<span class="t" style="left:401.81px;top:731.49px;font-size:11px;color:#000;font-weight:bold;transform:scaleX(1.1000);transform-origin:0 0;">250</span>
<div style="left:313px;top:748px;width:112px;height:1px;background:#000"></div>
<span class="t" style="left:316.50px;top:756.59px;font-size:11px;color:#000;transform:scaleX(0.9550);transform-origin:0 0;">Vr. Médio</span>
<span class="t" style="left:398.45px;top:755.79px;font-size:11px;color:#000;font-weight:bold;transform:scaleX(1.1000);transform-origin:0 0;">1,00</span>
<div style="left:313px;top:775px;width:112px;height:1px;background:#000"></div>
<div style="left:433px;top:645px;width:136px;height:159px;border:1px solid #d8d8d8"></div>
<div style="left:439px;top:640px;width:116px;height:10px;background:#f0f0f0"></div>
<span class="t" style="left:441.80px;top:641.09px;font-size:11px;color:#000;transform:scaleX(0.9884);transform-origin:0 0;">Vr. Tabela x Vr. Pedido</span>
<span class="t" style="left:441.80px;top:684.29px;font-size:11px;color:#000;transform:scaleX(0.9550);transform-origin:0 0;">Vr. Tabela</span>
<span class="t" style="left:522.49px;top:683.49px;font-size:11px;color:#000;font-weight:bold;transform:scaleX(1.1000);transform-origin:0 0;">250,00</span>
<div style="left:440px;top:700px;width:119px;height:1px;background:#000"></div>
<span class="t" style="left:441.80px;top:708.29px;font-size:11px;color:#000;transform:scaleX(0.9550);transform-origin:0 0;">Vr. Pedido</span>
<span class="t" style="left:522.49px;top:707.49px;font-size:11px;color:#000;font-weight:bold;transform:scaleX(1.1000);transform-origin:0 0;">250,00</span>
<div style="left:440px;top:724px;width:119px;height:1px;background:#000"></div>
<span class="t" style="left:441.80px;top:732.29px;font-size:11px;color:#000;transform:scaleX(0.9550);transform-origin:0 0;">Vr. Diferença</span>
<span class="t" style="left:535.95px;top:731.49px;font-size:11px;color:#000;font-weight:bold;transform:scaleX(1.1000);transform-origin:0 0;">0,00</span>
<div style="left:440px;top:748px;width:119px;height:1px;background:#000"></div>
<span class="t" style="left:441.80px;top:756.59px;font-size:11px;color:#000;transform:scaleX(0.9550);transform-origin:0 0;">% Diferença</span>
<span class="t" style="left:535.95px;top:755.79px;font-size:11px;color:#000;font-weight:bold;transform:scaleX(1.1000);transform-origin:0 0;">0,00</span>
<div style="left:440px;top:775px;width:119px;height:1px;background:#000"></div>
<div style="left:1110px;top:645px;width:481px;height:159px;border:1px solid #d8d8d8"></div>
<div style="left:1114px;top:638px;width:50px;height:10px;background:#f0f0f0"></div>
<span class="t" style="left:1117.00px;top:640.99px;font-size:11px;color:#000;transform:scaleX(0.9550);transform-origin:0 0;">Produtos</span>
<span class="t" style="left:1149.40px;top:671.10px;font-size:15px;color:#000;transform:scaleX(0.9600);transform-origin:0 0;">Vr Produtos</span>
<span class="t" style="left:1189.03px;top:694.40px;font-size:15px;color:#000;transform:scaleX(0.9600);transform-origin:0 0;">Vr IPI</span>
<span class="t" style="left:1188.23px;top:717.40px;font-size:15px;color:#000;transform:scaleX(0.9600);transform-origin:0 0;">Vr ST</span>
<span class="t" style="left:1145.30px;top:738.90px;font-size:15px;color:#000;transform:scaleX(0.9673);transform-origin:0 0;">Vr Desconto</span>
<span class="t" style="left:1177.38px;top:765.10px;font-size:15px;color:#000;transform:scaleX(0.9600);transform-origin:0 0;">Vr Total</span>
<span class="t" style="left:1352.80px;top:669.69px;font-size:12.3px;color:#000;font-weight:bold;transform:scaleX(1.1483);transform-origin:0 0;">250,00</span>
<span class="t" style="left:1361.00px;top:695.39px;font-size:12.3px;color:#000;font-weight:bold;transform:scaleX(1.1371);transform-origin:0 0;">16,25</span>
<span class="t" style="left:1368.30px;top:718.39px;font-size:12.3px;color:#000;font-weight:bold;transform:scaleX(1.1571);transform-origin:0 0;">0,00</span>
<span class="t" style="left:1368.30px;top:740.89px;font-size:12.3px;color:#000;font-weight:bold;transform:scaleX(1.1571);transform-origin:0 0;">0,00</span>
<span class="t" style="left:1342.00px;top:765.13px;font-size:14.5px;color:#000;font-weight:bold;transform:scaleX(1.2176);transform-origin:0 0;">266,25</span>
<div style="left:1141px;top:687px;width:263px;height:1px;background:#000"></div>
<div style="left:1141px;top:712px;width:263px;height:1px;background:#000"></div>
<div style="left:1141px;top:735px;width:263px;height:1px;background:#000"></div>
<div style="left:1141px;top:759px;width:263px;height:1px;background:#000"></div>
<div style="left:1141px;top:784px;width:263px;height:2px;background:#000"></div>
<div style="left:1410px;top:651px;width:177px;height:151px;border:1px solid #d8d8d8"></div>
<div style="left:1414px;top:646px;width:152px;height:10px;background:#f0f0f0"></div>
<span class="t" style="left:1417.00px;top:646.59px;font-size:11px;color:#000;transform:scaleX(0.9734);transform-origin:0 0;">Diferencial de Alíquota (DIFAL)</span>
<span class="t" style="left:1427.00px;top:670.40px;font-size:13px;color:#000;transform:scaleX(0.9600);transform-origin:0 0;">Valor ICMS Destinatário</span>
<span class="t" style="left:1525.30px;top:696.49px;font-size:12.3px;color:#000;font-weight:bold;transform:scaleX(1.1571);transform-origin:0 0;">0,00</span>
<span class="t" style="left:1446.00px;top:720.90px;font-size:15px;color:#000;">Vr Total com Difal</span>
<span class="t" style="left:1509.80px;top:748.49px;font-size:12.3px;color:#000;font-weight:bold;transform:scaleX(1.1483);transform-origin:0 0;">266,25</span>
<div style="left:0px;top:813px;width:1600px;height:1px;background:#f0f0f0"></div>
<div style="left:0px;top:814px;width:1600px;height:1px;background:#d0d0d0"></div>
<div style="left:0px;top:815px;width:1600px;height:37px;background:#f0f0f0"></div>
<div style="left:1599px;top:816px;width:1px;height:34px;background:#d4d4d4"></div>
<div style="left:249px;top:816px;width:1px;height:36px;background:#d4d4d4"></div>
<div style="left:449px;top:816px;width:1px;height:36px;background:#d4d4d4"></div>
<div style="left:629px;top:816px;width:1px;height:36px;background:#d4d4d4"></div>
<span class="t" style="left:634.30px;top:828.44px;font-size:12px;color:#000;transform:scaleX(0.9739);transform-origin:0 0;">Total de 1 registro(s) encontrado(s) em 01 seg</span>
<svg style="left:2px;top:6px;" width="17" height="9" viewBox="0 0 17 9"><path d="M5.4 1.9C4.9 1.4 4.5 1.1 3.9 1.1C2.2 1.1 1.1 2.6 1.1 4.5S2.2 7.9 3.9 7.9C4.5 7.9 4.9 7.7 5.4 7.2" fill="none" stroke="#f5000f" stroke-width="1.9" stroke-linecap="round"/><path d="M7 7.2V3.2L9.7 6.8V2.8" fill="none" stroke="#f5000f" stroke-width="1.3"/><path d="M15 1.2H11.6V7.8H15M11.6 4.5H14.6" fill="none" stroke="#f5000f" stroke-width="1.9"/></svg>
<svg style="left:96px;top:50px;" width="25" height="25" viewBox="0 0 25 25"><defs><linearGradient id="g1" x1="0" y1="0" x2="1" y2="1"><stop offset="0" stop-color="#e8e8e8"/><stop offset="1" stop-color="#a0a0a0"/></linearGradient><linearGradient id="g1b" x1="1" y1="0" x2="0" y2="1"><stop offset="0" stop-color="#b8b8b8"/><stop offset="1" stop-color="#686868"/></linearGradient><linearGradient id="g2" x1="0" y1="1" x2="1" y2="0"><stop offset="0" stop-color="#1a88d0"/><stop offset=".5" stop-color="#8ae0fc"/><stop offset="1" stop-color="#1a88d0"/></linearGradient></defs><path d="M5.5 19L12.5 12" stroke="url(#g1b)" stroke-width="4.6" stroke-linecap="square"/><path d="M12 6.5C12.5 3.5 15 2 18 2.2L15.8 4.8L17.2 8.2L20.6 8.5L22.8 6C23.3 9.5 21 12.5 17.5 12.5L13 12.5Z" fill="url(#g1)"/><path d="M4.8 7.2L12 14" stroke="#b4b4b4" stroke-width="4.6" stroke-linecap="round"/><path d="M12.3 16.3L18.2 22.2" stroke="#1a84cc" stroke-width="6.6"/><path d="M12.3 16.3L18.2 22.2" stroke="url(#g2)" stroke-width="5"/></svg>
<svg style="left:150px;top:52px;" width="19" height="22" viewBox="0 0 19 22"><defs><linearGradient id="g3" x1="0" y1="0" x2="1" y2="0"><stop offset="0" stop-color="#6a6a6a"/><stop offset=".5" stop-color="#e8e8e8"/><stop offset="1" stop-color="#6a6a6a"/></linearGradient><linearGradient id="g4" x1="0" y1="0" x2="0" y2="1"><stop offset="0" stop-color="#8ad8f8"/><stop offset="1" stop-color="#1a7cc8"/></linearGradient></defs><rect x="0.5" y="1" width="18" height="4" rx="1" fill="url(#g4)"/><path d="M0.5 5H18.5L11.5 13.5H7.5Z" fill="url(#g3)"/><path d="M7.5 13H11.5V21L9.5 21.5L7.5 21Z" fill="#c4c4c4"/><path d="M9 13V21" stroke="#e8e8e8" stroke-width="1.2"/></svg>
<svg style="left:205px;top:52px;" width="21" height="23" viewBox="0 0 21 23"><path d="M1 1H11L16 5V21H1Z" fill="#ededed" stroke="#d0d0d0" stroke-width="0.8"/><path d="M11 1L16 5H11Z" fill="#9a9a9a"/><path d="M3 4h4M3 7h5M3 10h8M3 13h8M3 16h7" stroke="#a8a8a8" stroke-width="0.9"/><path d="M9.5 15H19.5M14.5 9.5V21" stroke="#1f96d6" stroke-width="4.6"/></svg>
<svg style="left:270px;top:52px;" width="21" height="23" viewBox="0 0 21 23"><path d="M1 1H11L16 5V21H1Z" fill="#ededed" stroke="#d0d0d0" stroke-width="0.8"/><path d="M11 1L16 5H11Z" fill="#9a9a9a"/><path d="M3 4h4M3 7h5M3 10h8M3 13h8M3 16h7" stroke="#a8a8a8" stroke-width="0.9"/><path d="M6.5 21L18 9.5" stroke="#303030" stroke-width="3"/><path d="M17 10.5L19.5 8" stroke="#2a8ed0" stroke-width="3"/></svg>
<svg style="left:334px;top:53px;" width="21" height="20" viewBox="0 0 21 20"><defs><linearGradient id="g5" x1="0" y1="0" x2="1" y2="0"><stop offset="0" stop-color="#1a86d0"/><stop offset=".65" stop-color="#8ae2fc"/><stop offset="1" stop-color="#1e88d0"/></linearGradient><linearGradient id="g5b" x1="0" y1="0" x2="1" y2="0"><stop offset="0" stop-color="#8a8a8a"/><stop offset=".6" stop-color="#e0e0e0"/><stop offset="1" stop-color="#8a8a8a"/></linearGradient></defs><path d="M1.5 4H19.5L18 19.5H3Z" fill="url(#g5)"/><rect x="0.5" y="1" width="20" height="3.3" rx="1.5" fill="url(#g5b)"/><path d="M10.5 6.8L15.5 15.2H5.5Z" fill="none" stroke="#f4fbff" stroke-width="2" stroke-dasharray="4.3 1.5" stroke-linejoin="round"/></svg>
<svg style="left:412px;top:56px;" width="15" height="15" viewBox="0 0 15 15"><path d="M3 3L12 12M12 3L3 12" stroke="#9c9c9c" stroke-width="4" stroke-linecap="round"/></svg>
<svg style="left:478px;top:52px;" width="21" height="22" viewBox="0 0 21 22"><path d="M0 1H17L20 4V21H0Z" fill="#a2a2a2"/></svg>
<svg style="left:531px;top:53px;" width="19" height="20" viewBox="0 0 19 20"><defs><linearGradient id="g6" x1="0" y1="0" x2="1" y2="1"><stop offset="0" stop-color="#4cc2f4"/><stop offset="1" stop-color="#0a5ea8"/></linearGradient></defs><path d="M6 1H18V18H9V15.5L6 17Z" fill="url(#g6)"/><rect x="15.5" y="6.5" width="1.3" height="1.3" fill="#111"/><path d="M0.5 12H5.5V9.5L10 14L5.5 18.5V16H0.5Z" fill="#e01818"/></svg>
<svg style="left:589px;top:53px;" width="20" height="20" viewBox="0 0 20 20"><defs><radialGradient id="g7" cx=".45" cy=".25" r=".8"><stop offset="0" stop-color="#a8e0fa"/><stop offset="1" stop-color="#1a78c0"/></radialGradient></defs><circle cx="10" cy="10" r="9.3" fill="url(#g7)"/><rect x="9" y="8" width="2.2" height="8" fill="#fff"/><circle cx="10.1" cy="5.3" r="1.3" fill="#fff"/></svg>
<svg style="left:657px;top:52px;" width="19" height="23" viewBox="0 0 19 23"><defs><linearGradient id="g8" x1="0" y1="0" x2="0" y2="1"><stop offset="0" stop-color="#8ad6f8"/><stop offset="1" stop-color="#1a82cc"/></linearGradient><linearGradient id="g9" x1="0" y1="0" x2="0" y2="1"><stop offset="0" stop-color="#f4f4f4"/><stop offset="1" stop-color="#d8d8d8"/></linearGradient></defs><rect x="0" y="4" width="15" height="15.5" fill="url(#g8)"/><rect x="5" y="6" width="13" height="16.5" fill="url(#g9)"/><path d="M3 3.5H12V6.5H3Z" fill="#8a8a8a"/><circle cx="7.5" cy="2.5" r="1.6" fill="#8a8a8a"/></svg>
<svg style="left:724px;top:50px;" width="26" height="26" viewBox="0 0 26 26"><defs><linearGradient id="g10" x1="0" y1="0" x2="1" y2="0.6"><stop offset="0" stop-color="#2a8ae0"/><stop offset="1" stop-color="#5ac8f4"/></linearGradient></defs><path d="M1 5.5L13 1L24.3 11.5L23.5 13.5L10 23.7Z" fill="url(#g10)"/><path d="M1.5 5.5L5 4.2L17 19.5L10.5 23Z" fill="#bfe6fb"/><path d="M1 5.5L10 23.5" stroke="#1a5ac0" stroke-width="1.6"/><path d="M5.5 3.5L19.5 15" stroke="#1a40a8" stroke-width="2.8"/><path d="M19 15L22.5 17.5" stroke="#e8a050" stroke-width="2.4"/><path d="M10.5 22.8L23 13.2" stroke="#f4f8ff" stroke-width="1.2"/><path d="M11 21.8L17.5 22.2" stroke="#e07030" stroke-width="1.1"/></svg>
<svg style="left:798px;top:53px;" width="21" height="21" viewBox="0 0 21 21"><defs><linearGradient id="g11" x1="0" y1="0" x2="0" y2="1"><stop offset="0" stop-color="#8ad8f8"/><stop offset="1" stop-color="#1a7ac4"/></linearGradient><linearGradient id="g12" x1="0" y1="0" x2="0" y2="1"><stop offset="0" stop-color="#d4d4d4"/><stop offset="1" stop-color="#686868"/></linearGradient></defs><rect x="0.5" y="12" width="19" height="6.8" rx="1.6" fill="url(#g12)"/><rect x="4" y="12" width="11.5" height="3" fill="#333"/><path d="M9.7 1.5L15.5 8H12.8V14.5H6.6V8H3.9Z" fill="url(#g11)"/></svg>
<svg style="left:867px;top:51px;" width="24" height="25" viewBox="0 0 24 25"><defs><linearGradient id="g16" x1="0" y1="0" x2="1" y2="0"><stop offset="0" stop-color="#6aa8e0"/><stop offset="1" stop-color="#0a88d8"/></linearGradient></defs><rect x="1.2" y="0.5" width="22" height="4" fill="#9ac0e8" stroke="#3a6aa8" stroke-width="0.9"/><rect x="11.2" y="5.5" width="12" height="3.8" fill="url(#g16)" stroke="#2a6ab0" stroke-width="0.9"/><rect x="14.2" y="10.3" width="9" height="3.8" fill="#0a88d8" stroke="#2a6ab0" stroke-width="0.9"/><rect x="10.2" y="15.1" width="13" height="3.8" fill="#0a8ad8" stroke="#2a6ab0" stroke-width="0.9"/><rect x="1.2" y="20" width="22" height="4" fill="url(#g16)" stroke="#2a6ab0" stroke-width="0.9"/><path d="M2 6V18.5L11.5 12.2Z" fill="#e4e4e0" stroke="#8a8a8a" stroke-width="0.9"/></svg>
<svg style="left:940px;top:50px;" width="21" height="25" viewBox="0 0 21 25"><defs><radialGradient id="g13" cx=".5" cy=".45" r=".6"><stop offset="0" stop-color="#f0dcb8"/><stop offset="1" stop-color="#b89468"/></radialGradient><linearGradient id="g15" x1="0" y1="0" x2="0" y2="1"><stop offset="0" stop-color="#4a4a4a"/><stop offset="1" stop-color="#101010"/></linearGradient></defs><path d="M0.5 23.7C0.5 16 3 13.1 8 13.1H12C17 13.1 19.6 16 19.6 23.7Z" fill="url(#g15)"/><path d="M7.5 13.1H12.5L11.6 24H8.4Z" fill="#f4f4f4"/><path d="M9.3 14.3H10.7L11 23.5H9Z" fill="#222"/><ellipse cx="10" cy="8.8" rx="4.4" ry="5" fill="url(#g13)"/><path d="M5.2 9C4.5 3.5 7 1.2 10 1.2S15.5 3.5 14.8 9C14.5 6.5 13 5.2 10 6.5C7 5.2 5.5 6.5 5.2 9Z" fill="#1e1e1e"/></svg>
<svg style="left:366px;top:234px;shape-rendering:crispEdges" width="15" height="14" viewBox="0 0 15 14"><rect x="3" y="0" width="3" height="2" fill="#000"/><rect x="9" y="0" width="3" height="2" fill="#000"/><rect x="2" y="2" width="5" height="2" fill="#000"/><rect x="8" y="2" width="5" height="2" fill="#000"/><rect x="0" y="4" width="7" height="10" fill="#000"/><rect x="8" y="4" width="7" height="10" fill="#000"/><rect x="6" y="4" width="3" height="6" fill="#000"/><rect x="1" y="3" width="1" height="1" fill="#000"/><rect x="13" y="3" width="1" height="1" fill="#000"/><rect x="4" y="1" width="1" height="2" fill="#0010f0"/><rect x="10" y="1" width="1" height="2" fill="#0010f0"/><rect x="3" y="3" width="3" height="2" fill="#0010f0"/><rect x="9" y="3" width="3" height="2" fill="#0010f0"/><rect x="1" y="5" width="5" height="8" fill="#0010f0"/><rect x="9" y="5" width="5" height="8" fill="#0010f0"/><rect x="6" y="5" width="3" height="4" fill="#0010f0"/><rect x="2" y="4" width="4" height="1" fill="#0010f0"/><rect x="9" y="4" width="4" height="1" fill="#0010f0"/><rect x="4" y="1" width="1" height="1" fill="#fff"/><rect x="10" y="1" width="1" height="1" fill="#fff"/><rect x="3" y="4" width="1" height="1" fill="#fff"/><rect x="9" y="4" width="1" height="1" fill="#fff"/><rect x="2" y="6" width="1" height="2" fill="#fff"/><rect x="6" y="6" width="1" height="1" fill="#fff"/><rect x="9" y="6" width="1" height="2" fill="#fff"/><rect x="1" y="10" width="1" height="1" fill="#fff"/><rect x="11" y="10" width="1" height="1" fill="#fff"/></svg>
<svg style="left:366px;top:278px;shape-rendering:crispEdges" width="15" height="14" viewBox="0 0 15 14"><rect x="3" y="0" width="3" height="2" fill="#000"/><rect x="9" y="0" width="3" height="2" fill="#000"/><rect x="2" y="2" width="5" height="2" fill="#000"/><rect x="8" y="2" width="5" height="2" fill="#000"/><rect x="0" y="4" width="7" height="10" fill="#000"/><rect x="8" y="4" width="7" height="10" fill="#000"/><rect x="6" y="4" width="3" height="6" fill="#000"/><rect x="1" y="3" width="1" height="1" fill="#000"/><rect x="13" y="3" width="1" height="1" fill="#000"/><rect x="4" y="1" width="1" height="2" fill="#0010f0"/><rect x="10" y="1" width="1" height="2" fill="#0010f0"/><rect x="3" y="3" width="3" height="2" fill="#0010f0"/><rect x="9" y="3" width="3" height="2" fill="#0010f0"/><rect x="1" y="5" width="5" height="8" fill="#0010f0"/><rect x="9" y="5" width="5" height="8" fill="#0010f0"/><rect x="6" y="5" width="3" height="4" fill="#0010f0"/><rect x="2" y="4" width="4" height="1" fill="#0010f0"/><rect x="9" y="4" width="4" height="1" fill="#0010f0"/><rect x="4" y="1" width="1" height="1" fill="#fff"/><rect x="10" y="1" width="1" height="1" fill="#fff"/><rect x="3" y="4" width="1" height="1" fill="#fff"/><rect x="9" y="4" width="1" height="1" fill="#fff"/><rect x="2" y="6" width="1" height="2" fill="#fff"/><rect x="6" y="6" width="1" height="1" fill="#fff"/><rect x="9" y="6" width="1" height="2" fill="#fff"/><rect x="1" y="10" width="1" height="1" fill="#fff"/><rect x="11" y="10" width="1" height="1" fill="#fff"/></svg>
<svg style="left:121px;top:152px;" width="16" height="16" viewBox="0 0 16 16"><path d="M2 14L9 7" stroke="#8a8a8a" stroke-width="3" stroke-linecap="round"/><circle cx="11" cy="5" r="3.6" fill="#c8c8c8"/><path d="M11.5 3.5L14.5 0.5L16 2.5L13 5.5Z" fill="#f0f0f0"/><path d="M2 4L7 9" stroke="#a0a0a0" stroke-width="3" stroke-linecap="round"/><path d="M7 9L12 14" stroke="#2a98d8" stroke-width="4"/></svg>
<svg style="left:156px;top:154px;" width="12" height="12" viewBox="0 0 12 12"><path d="M0 6H12M6 0V12" stroke="#a8a8a8" stroke-width="4"/></svg>
<svg style="left:197px;top:154px;" width="13" height="12" viewBox="0 0 13 12"><path d="M1 11L11.5 0.8" stroke="#3a3a3a" stroke-width="2.2"/></svg>
<svg style="left:229px;top:153px;" width="14" height="13" viewBox="0 0 14 13"><path d="M1.5 2.5H12.5L11.5 12.5H2.5Z" fill="#b8b8b8"/><rect x="0.5" y="0.5" width="13" height="2.5" fill="#9a9a9a"/><circle cx="7" cy="8" r="2.2" fill="none" stroke="#e8e8e8" stroke-width="1"/></svg>
<svg style="left:263px;top:155px;" width="12" height="11" viewBox="0 0 12 11"><path d="M2 2L10 9M10 2L2 9" stroke="#111" stroke-width="3" stroke-linecap="round"/></svg>
<svg style="left:295px;top:154px;" width="14" height="12" viewBox="0 0 14 12"><path d="M0.5 0.5H13.5V11.5H0.5Z" fill="#b0b0b0"/><rect x="3" y="0.5" width="8" height="4" fill="#e0e0e0"/><rect x="2" y="6.5" width="10" height="5" fill="#ececec"/></svg>
<svg style="left:337px;top:153px;" width="13" height="15" viewBox="0 0 13 15"><path d="M10.5 4.5C10 3 8.5 2.5 6.5 2.5C4 2.5 2.5 3.5 2.5 5C2.5 8 10.5 6.5 10.5 10C10.5 11.5 9 12.5 6.5 12.5C4 12.5 2.5 11.5 2 10M6.5 0.5V14.5" fill="none" stroke="#333" stroke-width="2.3"/></svg>
<svg style="left:376px;top:153px;" width="15" height="14" viewBox="0 0 15 14"><path d="M5 2.3H14M5 7.3H14M5 12.3H14" stroke="#111" stroke-width="1.6"/><path d="M1 0.5V3.5M1 5.5L3 6.5L1 8.5M1 10.5H2.5V13H1" fill="none" stroke="#999" stroke-width="0.9"/></svg>
<svg style="left:410px;top:153px;" width="15" height="15" viewBox="0 0 15 15"><path d="M7.5 0.5L14 7H10.5V12H4.5V7H1Z" fill="#999"/><rect x="0.5" y="12" width="14" height="2.5" fill="#a8a8a8"/></svg>
<svg style="left:442px;top:152px;" width="16" height="15" viewBox="0 0 16 15"><defs><linearGradient id="g17" x1="0" y1="0" x2="0" y2="1"><stop offset="0" stop-color="#c89a50"/><stop offset="1" stop-color="#9a6410"/></linearGradient></defs><rect x="1.5" y="3.5" width="13" height="9" rx="1.6" fill="#f2f2f2" stroke="url(#g17)" stroke-width="1.8"/><circle cx="5" cy="7.3" r="1.5" fill="#8acc3a"/><path d="M2.5 12C2.5 9.6 3.6 9 5 9S7.5 9.6 7.5 12Z" fill="#8acc3a"/><rect x="8.5" y="9" width="5" height="3" fill="#d8d8d8"/><rect x="7" y="0.5" width="2" height="5" rx="0.8" fill="#a8a8a8"/></svg>
<svg style="left:475px;top:151px;" width="17" height="18" viewBox="0 0 17 18"><rect x="5.5" y="1" width="9" height="10" rx="1" fill="#fff" stroke="#999" stroke-width="0.9"/><rect x="3" y="3" width="9" height="11" rx="1" fill="#fff" stroke="#888" stroke-width="0.9"/><rect x="0.8" y="5" width="9" height="12" rx="1" fill="#fff" stroke="#555" stroke-width="1.1"/><rect x="2.5" y="7" width="6" height="5.5" fill="#b8c8e8"/><circle cx="5.5" cy="8.8" r="1.3" fill="#5a7ac0"/><path d="M3.6 12.3C3.6 10.8 4.4 10.2 5.5 10.2S7.4 10.8 7.4 12.3Z" fill="#5a7ac0"/><rect x="3" y="14" width="5" height="0.8" fill="#7a9ad0"/><path d="M9.2 9.5H16.3M12.75 6V13" stroke="#2a9a18" stroke-width="3.6"/><path d="M10.2 9.5H15.3M12.75 7V12" stroke="#d4f0c0" stroke-width="1.6"/></svg>
<svg style="left:508px;top:152px;" width="16" height="15" viewBox="0 0 16 15"><defs><radialGradient id="g18" cx=".4" cy=".35" r=".7"><stop offset="0" stop-color="#ffe88a"/><stop offset=".6" stop-color="#f4c020"/><stop offset="1" stop-color="#d89010"/></radialGradient></defs><ellipse cx="9" cy="8.5" rx="6" ry="5.5" fill="url(#g18)"/><ellipse cx="6.5" cy="6" rx="5.8" ry="5" fill="url(#g18)"/><path d="M4.5 3.5L9 9M8 7.5L12 12" stroke="#e8a030" stroke-width="0.9"/></svg>
<svg style="left:550px;top:152px;" width="14" height="16" viewBox="0 0 14 16"><defs><linearGradient id="g19" x1="0" y1="0" x2="0" y2="1"><stop offset="0" stop-color="#8ad6f8"/><stop offset="1" stop-color="#1a82cc"/></linearGradient><linearGradient id="g20" x1="0" y1="0" x2="0" y2="1"><stop offset="0" stop-color="#f8f8f8"/><stop offset="1" stop-color="#dcdcdc"/></linearGradient></defs><rect x="0.5" y="3" width="9" height="12" fill="url(#g19)"/><rect x="3.5" y="4.5" width="10" height="11" fill="url(#g20)" stroke="#d0d0d0" stroke-width="0.6"/><path d="M2.5 4.2H10V2.5L6.2 0.5L2.5 2.5Z" fill="#999"/></svg>
<svg style="left:582px;top:152px;" width="16" height="15" viewBox="0 0 16 15"><path d="M1 3L8 0.5L15 3V12L8 14.5L1 12Z" fill="#c8a058"/><path d="M1 3L8 5.5L15 3M8 5.5V14.5" fill="none" stroke="#8a6a30" stroke-width="0.8"/><path d="M1 3L8 0.5L15 3L8 5.5Z" fill="#e4c88a"/></svg>
<svg style="left:614px;top:152px;" width="17" height="16" viewBox="0 0 17 16"><path d="M0.5 0.5H10L13 3.5V15.5H0.5Z" fill="#fff" stroke="#3070c0" stroke-width="1"/><rect x="4" y="3" width="5" height="1.2" fill="#d02020"/><path d="M2.5 6.5H7M2.5 9H6M2.5 11.5H6" stroke="#3a5a90" stroke-width="0.9"/><circle cx="11.5" cy="10.5" r="5" fill="#2a7ad0"/><rect x="10.8" y="9.3" width="1.5" height="4.5" fill="#fff"/><rect x="10.8" y="7" width="1.5" height="1.4" fill="#fff"/></svg>
<svg style="left:648px;top:152px;" width="16" height="16" viewBox="0 0 16 16"><rect x="0.5" y="0.5" width="15" height="15" fill="#f4f4f4" stroke="#6a7a90" stroke-width="1"/><rect x="1" y="1" width="14" height="3" fill="#3a8ad8"/><path d="M1 7H15M1 10H15M1 13H15M5 4V15M11 4V15" stroke="#8a9ab0" stroke-width="0.9"/></svg>
<svg style="left:681px;top:152px;" width="16" height="16" viewBox="0 0 16 16"><defs><radialGradient id="g14" cx=".4" cy=".3" r=".7"><stop offset="0" stop-color="#c0e890"/><stop offset="1" stop-color="#5aa83a"/></radialGradient></defs><circle cx="8" cy="8" r="7.3" fill="url(#g14)"/><path d="M10.4 5.3C10 4.4 9.1 4 8 4C6.7 4 5.8 4.7 5.8 5.8C5.8 8 10.3 7.3 10.3 9.9C10.3 11 9.4 11.8 8 11.8C6.8 11.8 5.9 11.3 5.5 10.4M8 2.5V4M8 11.8V13.4" fill="none" stroke="#fff" stroke-width="1.6"/></svg>
<svg style="left:715px;top:151px;" width="14" height="15" viewBox="0 0 14 15"><rect x="0.5" y="4" width="13" height="5" fill="#8a4a20"/><rect x="9" y="0.5" width="1.3" height="4" fill="#6a3a18"/><rect x="11" y="0.5" width="1.3" height="4" fill="#6a3a18"/><rect x="0.5" y="9" width="13" height="3" fill="#f0f0f0"/><rect x="2" y="9.5" width="2" height="2" fill="#555"/><rect x="5.5" y="9" width="3" height="3.5" fill="#777"/><rect x="10" y="9.5" width="2" height="2" fill="#555"/><rect x="0.5" y="12.5" width="13" height="2" fill="#a05a28"/></svg>
<svg style="left:1024px;top:151px;" width="16" height="18" viewBox="0 0 16 18"><path d="M5 1H12C14 1 15 2.5 15 4.5V8L12.5 6V9H14L8 16L2 9H5Z" fill="#b4b4b4"/><path d="M12.5 6V3.5" stroke="#d0d0d0" stroke-width="1.2"/></svg>
</body></html>
